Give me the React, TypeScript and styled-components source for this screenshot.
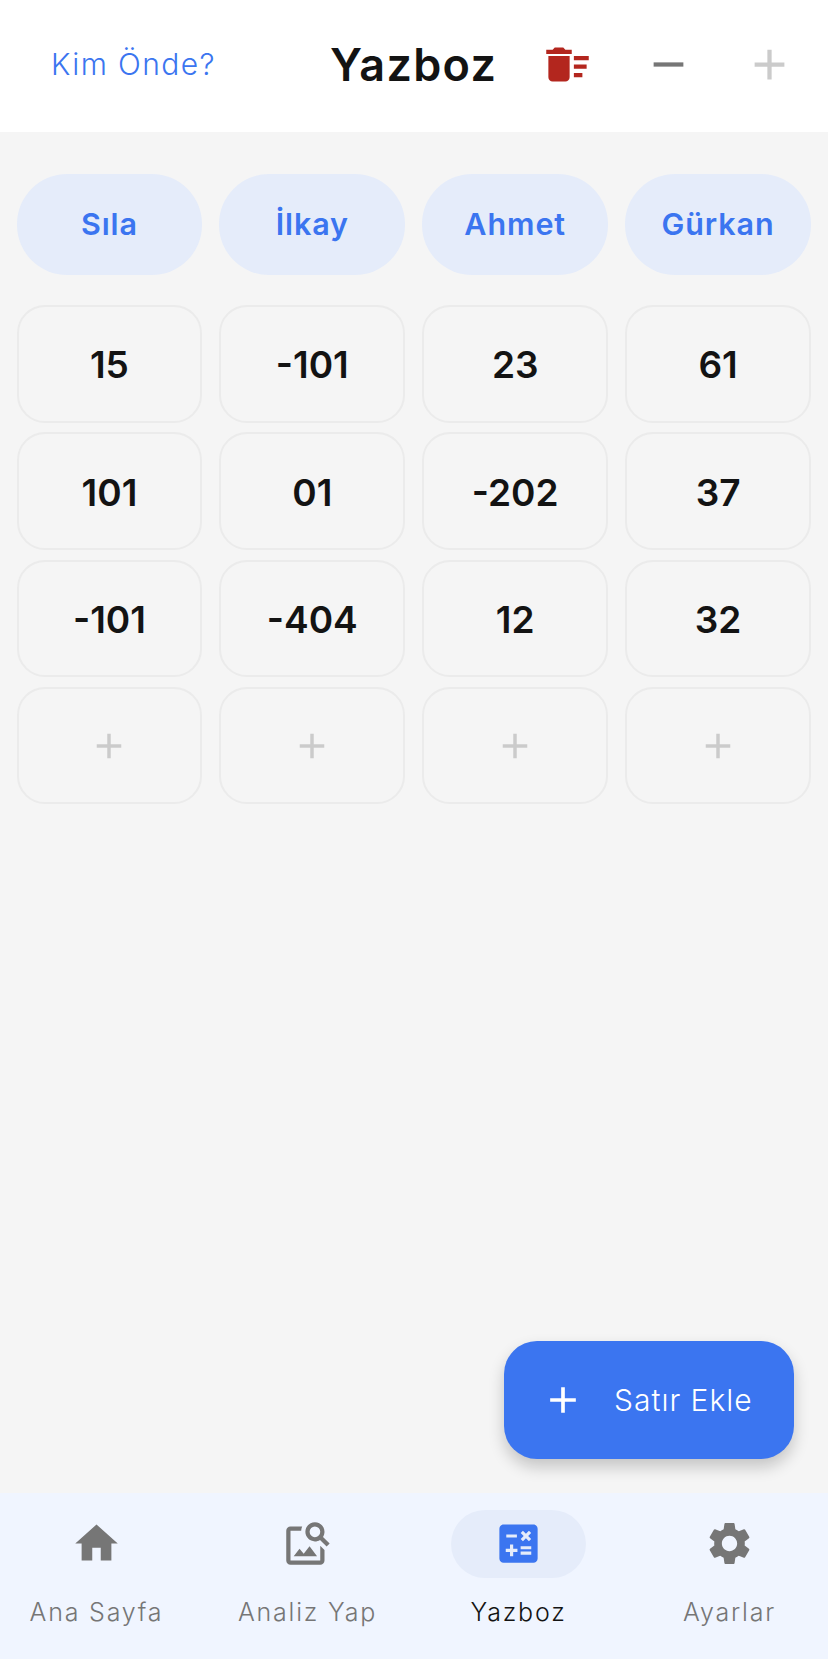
import React from 'react';
import styled, { createGlobalStyle } from 'styled-components';
import { MdAdd, MdCalculate, MdDeleteSweep, MdHome, MdImageSearch, MdRemove, MdSettings } from 'react-icons/md';

const colors = {
  bg: '#f5f5f5',
  white: '#ffffff',
  primary: '#3b75f0',
  soft: '#e5ecfa',
  nav: '#f0f5ff',
  text: '#131313',
  muted: '#767676',
  faint: '#cbcbcb',
  border: '#ebebeb',
  danger: '#b3261e',
};

const GlobalStyle = createGlobalStyle`
  html, body {
    margin: 0;
    padding: 0;
    background: ${colors.bg};
    font-family: Inter, "Noto Sans", "Liberation Sans", sans-serif;
  }
  * { box-sizing: border-box; }
`;

const Page = styled.div`
  position: relative;
  width: 828px;
  height: 1659px;
  display: flex;
  flex-direction: column;
  background: ${colors.bg};
  overflow: hidden;
`;

const Header = styled.header`
  height: 132px;
  flex: none;
  display: grid;
  grid-template-columns: 279px 186px 303px;
  align-items: center;
  padding: 0 0 4px 51px;
  background: ${colors.white};
`;

const LeadLink = styled.div`
  font-size: 30px;
  font-weight: 300;
  letter-spacing: 1.4px;
  color: ${colors.primary};
  white-space: nowrap;
`;

const Title = styled.h1`
  margin: 0;
  font-size: 45px;
  font-weight: 600;
  letter-spacing: 1.3px;
  color: ${colors.text};
`;

const Actions = styled.div`
  display: grid;
  grid-template-columns: repeat(3, 101px);
  margin-left: 1px;
`;

const IconButton = styled.button<{ $tone: string }>`
  height: 60px;
  padding: 0;
  display: flex;
  align-items: center;
  justify-content: center;
  border: none;
  background: none;
  color: ${p => p.$tone};
  font-size: 51px;
`;

const Main = styled.main`
  flex: 1;
  padding: 42px 17px 0 16.5px;
`;

const Board = styled.div`
  display: grid;
  grid-template-columns: repeat(4, 1fr);
  grid-auto-rows: 117.5px;
  column-gap: 17px;
  row-gap: 9.8px;
`;

const NameRow = styled(Board)`
  grid-auto-rows: 101px;
  margin-bottom: 30px;
`;

const NamePill = styled.div`
  display: flex;
  align-items: center;
  justify-content: center;
  padding-bottom: 2px;
  border-radius: 50px;
  background: ${colors.soft};
  color: ${colors.primary};
  font-size: 30.5px;
  font-weight: 600;
  letter-spacing: 0.9px;
`;

const ScoreCell = styled.div`
  display: flex;
  align-items: center;
  justify-content: center;
  padding-top: 2px;
  border: 2px solid ${colors.border};
  border-radius: 28px;
  background: #f5f5f5;
  color: ${colors.text};
  font-size: 37px;
  font-weight: 600;
`;

const AddCell = styled(ScoreCell)`
  padding-top: 0;
  color: ${colors.faint};
  font-size: 42px;
`;

const Fab = styled.button`
  position: absolute;
  left: 504px;
  top: 1341px;
  width: 290px;
  height: 118px;
  padding: 0 0 0 37px;
  display: flex;
  align-items: center;
  gap: 29px;
  border: none;
  border-radius: 33px;
  background: ${colors.primary};
  color: ${colors.white};
  font-family: inherit;
  font-size: 30px;
  font-weight: 300;
  letter-spacing: 1px;
  box-shadow: 0 8px 16px rgba(0, 0, 0, 0.2);
  white-space: nowrap;
`;

const FabIcon = styled.span`
  display: flex;
  font-size: 44px;
`;

const BottomNav = styled.nav`
  height: 166px;
  flex: none;
  display: grid;
  grid-template-columns: repeat(4, 135px);
  column-gap: 76px;
  justify-content: center;
  padding: 17px 2px 0 0;
  background: ${colors.nav};
`;

const NavItem = styled.div<{ $active?: boolean }>`
  display: flex;
  flex-direction: column;
  align-items: center;
  color: ${p => (p.$active ? colors.text : colors.muted)};
`;

const NavIcon = styled.div<{ $active?: boolean }>`
  width: 135px;
  height: 68px;
  padding-bottom: 2px;
  display: flex;
  align-items: center;
  justify-content: center;
  border-radius: 34px;
  background: ${p => (p.$active ? colors.soft : 'transparent')};
  color: ${p => (p.$active ? colors.primary : colors.muted)};
  font-size: 51px;
`;

const NavLabel = styled.span`
  margin-top: 19px;
  font-size: 25px;
  font-weight: 300;
  letter-spacing: 1.8px;
  white-space: nowrap;
`;

const players = ['Sıla', 'İlkay', 'Ahmet', 'Gürkan'];

const scores = [
  ['15', '-101', '23', '61'],
  ['101', '01', '-202', '37'],
  ['-101', '-404', '12', '32'],
];

const tabs = [
  { label: 'Ana Sayfa', icon: <MdHome /> },
  { label: 'Analiz Yap', icon: <MdImageSearch /> },
  { label: 'Yazboz', icon: <MdCalculate />, active: true },
  { label: 'Ayarlar', icon: <MdSettings /> },
];

const App = () => (
  <Page>
    <GlobalStyle />
    <Header>
      <LeadLink>Kim Önde?</LeadLink>
      <Title>Yazboz</Title>
      <Actions>
        <IconButton $tone={colors.danger}><MdDeleteSweep /></IconButton>
        <IconButton $tone={colors.muted}><MdRemove /></IconButton>
        <IconButton $tone={colors.faint}><MdAdd /></IconButton>
      </Actions>
    </Header>

    <Main>
      <NameRow>
        {players.map(name => <NamePill key={name}>{name}</NamePill>)}
      </NameRow>
      <Board>
        {scores.flat().map((value, i) => <ScoreCell key={i}>{value}</ScoreCell>)}
        {players.map(name => <AddCell key={name}><MdAdd /></AddCell>)}
      </Board>
    </Main>

    <Fab>
      <FabIcon><MdAdd /></FabIcon>
      Satır Ekle
    </Fab>

    <BottomNav>
      {tabs.map(tab => (
        <NavItem key={tab.label} $active={tab.active}>
          <NavIcon $active={tab.active}>{tab.icon}</NavIcon>
          <NavLabel>{tab.label}</NavLabel>
        </NavItem>
      ))}
    </BottomNav>
  </Page>
);

export default App;
